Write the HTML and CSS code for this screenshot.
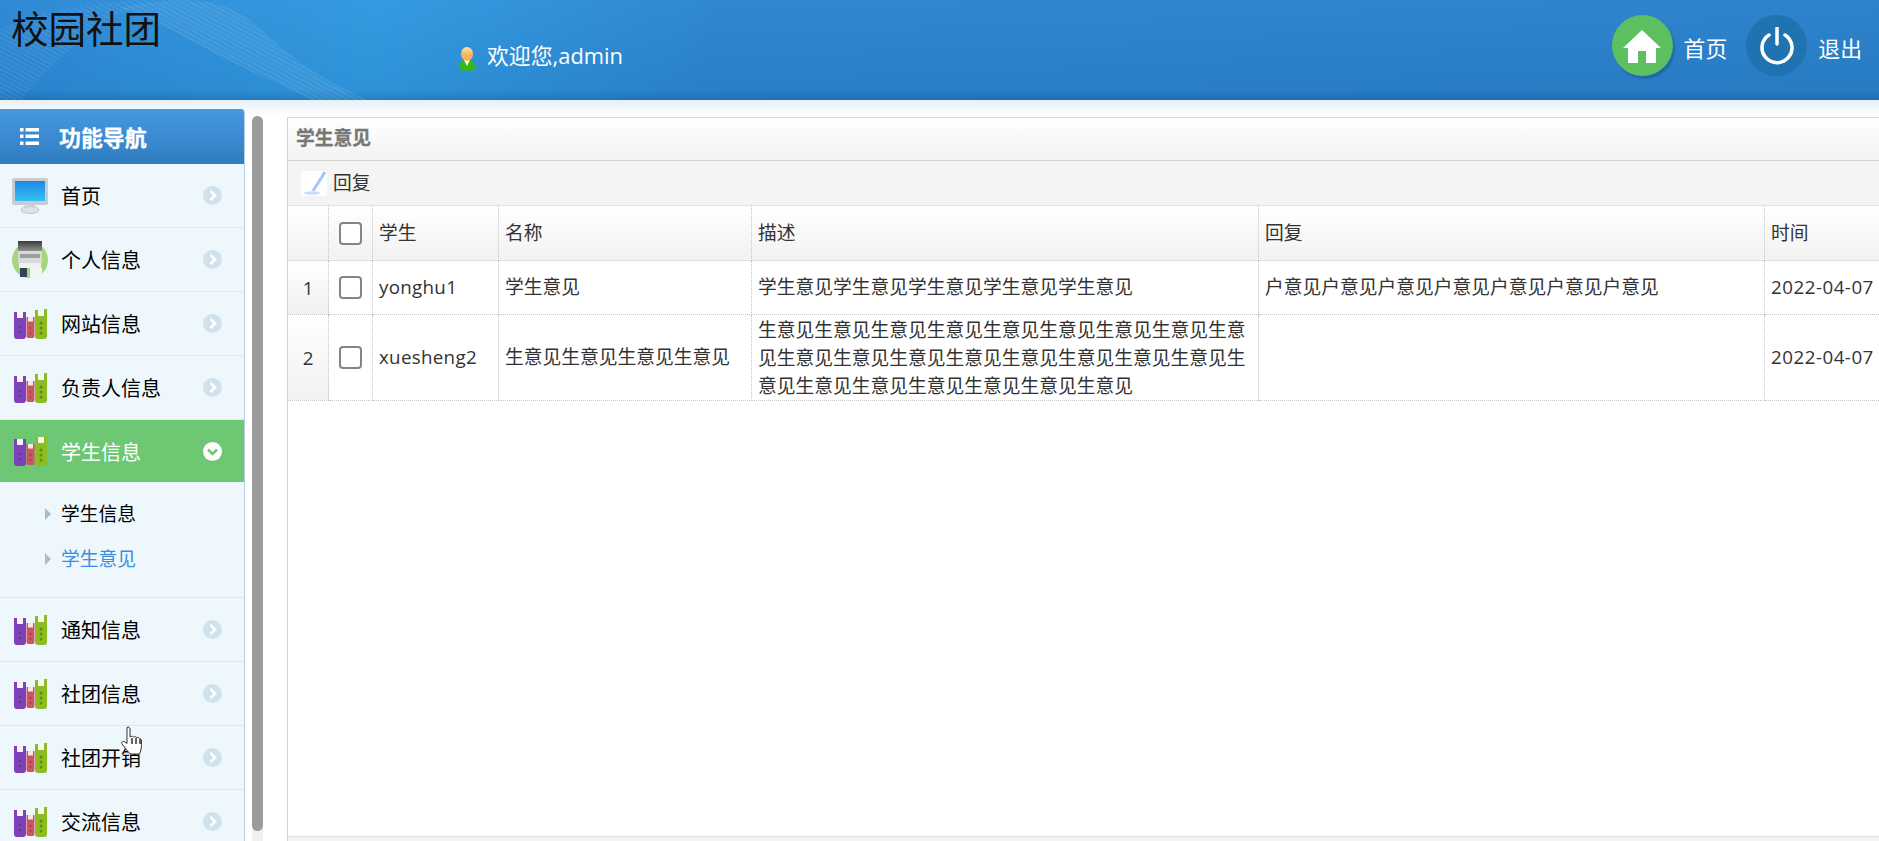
FILE: index.html
```html
<!DOCTYPE html>
<html lang="zh-CN">
<head>
<meta charset="utf-8">
<title>校园社团</title>
<link rel="stylesheet" href="styles.css">
</head>
<body>
<svg class="sprites" width="0" height="0" aria-hidden="true">
  <defs>
    <linearGradient id="screen" x1="0" y1="0" x2="0" y2="1"><stop offset="0" stop-color="#1f86e0"/><stop offset="1" stop-color="#35c3f5"/></linearGradient>
    <linearGradient id="body" x1="0" y1="0" x2="0" y2="1"><stop offset="0" stop-color="#ffe2b0"/><stop offset=".6" stop-color="#f6b45a"/></linearGradient>
    <linearGradient id="printer-top" x1="0" y1="0" x2="0" y2="1"><stop offset="0" stop-color="#3c3c3c"/><stop offset="1" stop-color="#8f8f8f"/></linearGradient>
    <symbol id="books" viewBox="0 0 33 30">
      <path d="M0 3h3v5q0 1 1 1h4q1 0 1-1V3h3v24q0 3-3 3H3q-3 0-3-3z" fill="#7d42ba"/>
      <path d="M3 3h6v5q0 1-1 1H4q-1 0-1-1z" fill="#f6f1fa"/>
      <circle cx="6" cy="18" r="1" fill="#5e3191"/><circle cx="6" cy="23" r="1" fill="#5e3191"/>
      <path d="M12.500 8h8v19q0 2-2 2h-4q-2 0-2-2z" fill="#cc5560"/>
      <rect x="14" y="8" width="5" height="4.500" fill="#f2e9ea"/>
      <circle cx="16.500" cy="19" r="1" fill="#a23a45"/><circle cx="16.500" cy="24" r="1" fill="#a23a45"/>
      <path d="M21 1h3v5q0 1 1 1h4q1 0 1-1V0h3v27q0 3-3 3h-6q-3 0-3-3z" fill="#8cbc20"/>
      <path d="M24 1h6v5q0 1-1 1h-4q-1 0-1-1z" fill="#f8f9f2"/>
      <circle cx="27" cy="14" r="1.500" fill="#618a10"/><circle cx="27" cy="19" r="1.500" fill="#618a10"/><circle cx="27" cy="24" r="1.500" fill="#618a10"/>
    </symbol>
    <symbol id="chev-right" viewBox="0 0 19 19">
      <circle cx="9.500" cy="9.500" r="9.500" fill="#d0e2ed"/>
      <path d="M7.500 5l4.500 4.500L7.500 14" fill="none" stroke="#fff" stroke-width="2.500"/>
    </symbol>
  </defs>
</svg>

<header class="topbar">
  <svg class="waves" width="420" height="100" viewBox="0 0 420 100" aria-hidden="true">
    <defs>
      <pattern id="lines" width="4" height="4" patternUnits="userSpaceOnUse" patternTransform="rotate(28)">
        <rect width="4" height="1.500" fill="#fff" fill-opacity=".09"/>
      </pattern>
    </defs>
    <path d="M120 8C190-8 230 0 262 30 295 62 330 84 368 100H312C270 80 220 58 172 30 150 18 134 12 120 8Z" fill="url(#lines)"/>
    <path d="M0 28C60 6 110 0 160 0L130 8C100 22 50 62 22 100H0Z" fill="url(#lines)"/>
    <path d="M120 8C190-8 230 0 262 30 295 62 330 84 368 100H312C270 80 220 58 172 30 150 18 134 12 120 8Z" fill="#fff" fill-opacity=".04"/>
  </svg>
  <h1 class="brand">校园社团</h1>
  <div class="welcome">
    <svg class="user-icon" width="18" height="24" viewBox="0 0 18 24" aria-hidden="true">
      <path d="M1 23c-1-6 2-9 5-10h6c3 1 6 4 5 10q-8 1.500-16 0z" fill="#35b81c"/>
      <path d="M6 13l3 6 3-6z" fill="#fff"/>
      <ellipse cx="9" cy="7" rx="6" ry="7" fill="url(#body)"/>
    </svg>
    <span class="welcome-text">欢迎您,admin</span>
  </div>
  <nav class="actions">
    <a class="action">
      <span class="disc disc-home">
        <svg width="40" height="36" viewBox="0 0 40 36" aria-hidden="true">
          <path d="M20 2L1 20h5v15h10V23h8v12h10V20h5z" fill="#fff"/>
        </svg>
      </span>
      <span class="action-label">首页</span>
    </a>
    <a class="action">
      <span class="disc disc-power">
        <svg width="36" height="38" viewBox="0 0 36 38" aria-hidden="true">
          <path d="M10 8a15 15 0 1 0 16 0" fill="none" stroke="#fff" stroke-width="3.500" stroke-linecap="round"/>
          <path d="M18 1v16" fill="none" stroke="#fff" stroke-width="3.500" stroke-linecap="round"/>
        </svg>
      </span>
      <span class="action-label">退出</span>
    </a>
  </nav>
</header>

<main class="content">
  <aside class="sidebar">
    <div class="nav-head">
      <svg class="nav-head-icon" width="19" height="17" viewBox="0 0 19 17" aria-hidden="true">
        <path d="M0 0h3.500v3.500H0zM0 6.500h3.500V10H0zM0 13.500h3.500V17H0zM5.500 0H19v3.500H5.500zM5.500 6.500H19V10H5.500zM5.500 13.500H19V17H5.500z" fill="#fff"/>
      </svg>
      <span>功能导航</span>
    </div>
    <ul class="menu">
      <li class="item">
        <svg class="item-icon" width="38" height="36" viewBox="0 0 38 36" aria-hidden="true">
          <rect x="1" y="0" width="36" height="27" rx="2" fill="#c9ccd0"/>
          <rect x="4" y="3" width="30" height="20" fill="url(#screen)"/>
          <path d="M14 27h10l1 3H13z" fill="#d4d6d8"/>
          <ellipse cx="19" cy="32" rx="9" ry="3.500" fill="#dfe1e3" stroke="#c4c6c8"/>
        </svg>
        <span class="item-label">首页</span>
        <svg class="chev" width="19" height="19"><use href="#chev-right"/></svg>
      </li>
      <li class="item">
        <svg class="item-icon" width="38" height="38" viewBox="0 0 38 38" aria-hidden="true">
          <circle cx="19" cy="19" r="18" fill="#a5d57c"/>
          <rect x="7" y="0" width="24" height="10" fill="url(#printer-top)"/>
          <rect x="7" y="10" width="24" height="12" fill="#d6dada"/>
          <rect x="9" y="13" width="20" height="4" fill="#9aa0a0"/>
          <rect x="8" y="22" width="22" height="5" fill="#f0f2ee"/>
          <rect x="9" y="27" width="7" height="9" fill="#34425f"/>
          <rect x="19" y="27" width="12" height="10" fill="#f3f5f0"/>
        </svg>
        <span class="item-label">个人信息</span>
        <svg class="chev" width="19" height="19"><use href="#chev-right"/></svg>
      </li>
      <li class="item">
        <svg class="item-icon" width="33" height="30"><use href="#books"/></svg>
        <span class="item-label">网站信息</span>
        <svg class="chev" width="19" height="19"><use href="#chev-right"/></svg>
      </li>
      <li class="item">
        <svg class="item-icon" width="33" height="30"><use href="#books"/></svg>
        <span class="item-label">负责人信息</span>
        <svg class="chev" width="19" height="19"><use href="#chev-right"/></svg>
      </li>
      <li class="item item-active">
        <svg class="item-icon" width="33" height="30"><use href="#books"/></svg>
        <span class="item-label">学生信息</span>
        <svg class="chev" width="19" height="19" viewBox="0 0 19 19" aria-hidden="true">
          <circle cx="9.500" cy="9.500" r="9.500" fill="#fff"/>
          <path d="M5 7.500l4.500 4.500L14 7.500" fill="none" stroke="#6ec873" stroke-width="2.500"/>
        </svg>
      </li>
      <li class="submenu">
        <a class="sub-link">学生信息</a>
        <a class="sub-link sub-link-current">学生意见</a>
      </li>
      <li class="item">
        <svg class="item-icon" width="33" height="30"><use href="#books"/></svg>
        <span class="item-label">通知信息</span>
        <svg class="chev" width="19" height="19"><use href="#chev-right"/></svg>
      </li>
      <li class="item">
        <svg class="item-icon" width="33" height="30"><use href="#books"/></svg>
        <span class="item-label">社团信息</span>
        <svg class="chev" width="19" height="19"><use href="#chev-right"/></svg>
      </li>
      <li class="item">
        <svg class="item-icon" width="33" height="30"><use href="#books"/></svg>
        <span class="item-label">社团开销</span>
        <svg class="chev" width="19" height="19"><use href="#chev-right"/></svg>
      </li>
      <li class="item">
        <svg class="item-icon" width="33" height="30"><use href="#books"/></svg>
        <span class="item-label">交流信息</span>
        <svg class="chev" width="19" height="19"><use href="#chev-right"/></svg>
      </li>
    </ul>
  </aside>

  <div class="rail"><div class="rail-thumb"></div></div>

  <section class="panel">
    <div class="panel-title">学生意见</div>
    <div class="toolbar">
      <svg class="reply-icon" width="26" height="25" viewBox="0 0 26 25" aria-hidden="true">
        <rect width="26" height="25" fill="#fff"/>
        <path d="M24 1L12 20" stroke="#a4c6f8" stroke-width="3" fill="none"/>
        <ellipse cx="11" cy="22" rx="8" ry="1.800" fill="#c9ddfa"/>
      </svg>
      <span class="toolbar-label">回复</span>
    </div>
    <div class="grid-wrap">
      <table class="grid">
        <colgroup>
          <col class="c-num"><col class="c-check"><col class="c-user"><col class="c-name"><col class="c-desc"><col class="c-reply"><col class="c-time">
        </colgroup>
        <thead>
          <tr>
            <th class="rownum"></th>
            <th class="check"><span class="box"></span></th>
            <th>学生</th><th>名称</th><th>描述</th><th>回复</th><th>时间</th>
          </tr>
        </thead>
        <tbody>
          <tr class="row-one">
            <td class="rownum">1</td>
            <td class="check"><span class="box"></span></td>
            <td class="latin">yonghu1</td>
            <td>学生意见</td>
            <td>学生意见学生意见学生意见学生意见学生意见</td>
            <td>户意见户意见户意见户意见户意见户意见户意见</td>
            <td class="date">2022-04-07</td>
          </tr>
          <tr class="row-two">
            <td class="rownum">2</td>
            <td class="check"><span class="box"></span></td>
            <td class="latin">xuesheng2</td>
            <td>生意见生意见生意见生意见</td>
            <td class="long-text">生意见生意见生意见生意见生意见生意见生意见生意见生意见生意见生意见生意见生意见生意见生意见生意见生意见生意见生意见生意见生意见生意见生意见生意见</td>
            <td></td>
            <td class="date">2022-04-07</td>
          </tr>
        </tbody>
      </table>
    </div>
    <div class="panel-foot"></div>
  </section>

  <svg class="cursor" width="23" height="30" viewBox="0 0 23 30" aria-hidden="true">
    <path d="M6 1.500c1.500-1 3 0 3 1.500v8l1-.5c1-.5 2 0 2.500.5 1-.5 2-.5 3 .5 1-.5 2.500 0 3 1 1 0 2 1 2 2.500 0 5 0 9-2 13H9L1 18c-1-2 1-3.500 3-2l2 1.500z" fill="#fff" stroke="#333" stroke-width="1"/>
    <path d="M11 12v6M15 12v6M19 13v5" stroke="#333" stroke-width="1.500" fill="none"/>
  </svg>
</main>
</body>
</html>
```
FILE: styles.css
```css
* { box-sizing: border-box; }

html, body {
  margin: 0;
  height: 100%;
  overflow: hidden;
  background: #fff;
}

body {
  position: relative;
  width: 1879px;
  height: 841px;
  font-family: "Open Sans", "Noto Sans CJK SC", sans-serif;
  color: #333;
}

.sprites { position: absolute; }

/* Header */
.topbar {
  position: relative;
  display: flex;
  height: 100px;
  color: #fff;
  overflow: hidden;
  background:
    linear-gradient(180deg, rgba(0,0,0,0) 90%, rgba(10,50,100,.2) 100%),
    linear-gradient(180deg, rgba(255,255,255,.03) 0, rgba(0,0,0,.04) 100%),
    linear-gradient(100deg, #2a86d4 0, #2e98e0 20%, #2a84d0 38%, #287fca 100%);
}

.waves {
  position: absolute;
  left: 0;
  top: 0;
}

.brand {
  position: relative;
  margin: 0;
  width: 458px;
  padding: 2px 0 0 11px;
  font-family: "Noto Sans CJK SC", sans-serif;
  font-size: 37.5px;
  line-height: 50px;
  font-weight: 400;
  color: #111;
}

.welcome {
  display: flex;
  align-items: flex-start;
  gap: 11px;
  padding-top: 47px;
  font-size: 21.875px;
  line-height: 24px;
}

.welcome-text { margin-top: -3px; }

.user-icon { flex: none; }

.actions {
  display: flex;
  gap: 19px;
  margin-left: auto;
  padding: 15px 17px 0 0;
  font-size: 21.875px;
}

.action {
  display: flex;
  align-items: center;
  gap: 11px;
  height: 61px;
}

.action-label { padding-top: 3px; }

.disc {
  display: flex;
  align-items: center;
  justify-content: center;
  width: 61px;
  height: 61px;
  border-radius: 50%;
}

.disc-home {
  background: #5cbf60;
  box-shadow: 2px 3px 2px rgba(20,80,140,.45);
}

.disc-power { background: #1f73b0; }

/* Main */
.content {
  position: relative;
  display: flex;
  align-items: flex-start;
  height: 741px;
  background: linear-gradient(180deg, #e6f0f6 0, #fff 17px);
}

/* Sidebar */
.sidebar {
  flex: none;
  width: 245px;
  height: 732px;
  margin-top: 9px;
  overflow: hidden;
  background: #eef7fc;
  border-right: 1px solid #b9d1e5;
  border-top-right-radius: 4px;
}

.nav-head {
  display: flex;
  align-items: center;
  gap: 20px;
  height: 55px;
  padding-left: 20px;
  color: #fff;
  font-size: 21.9px;
  font-weight: 700;
  -webkit-text-stroke: .3px #fff;
  background: linear-gradient(180deg, #4698df 0, #3c8bd2 50%, #2f7cbe 100%);
}

.nav-head-icon { flex: none; }

.menu {
  list-style: none;
  margin: 0;
  padding: 0;
}

.item {
  display: grid;
  grid-template-columns: 61px 1fr 19px;
  align-items: center;
  height: 64px;
  padding-right: 22px;
  font-size: 20px;
  color: #000;
  border-bottom: 1px solid #dce8ef;
}

.item-icon {
  justify-self: center;
  margin-left: -1px;
}

.chev { display: block; }

.item-active {
  height: 62px;
  color: #fff;
  background: #6ec873;
  border-bottom: 0;
}

.submenu {
  display: flex;
  flex-direction: column;
  height: 116px;
  padding: 10px 0 0;
  border-bottom: 1px solid #dce8ef;
}

.sub-link {
  position: relative;
  height: 44.5px;
  padding-left: 61px;
  font-size: 18.75px;
  line-height: 44.5px;
  color: #000;
}

.sub-link::before {
  content: "";
  position: absolute;
  left: 45px;
  top: 16px;
  border-left: 6px solid #a9bccb;
  border-top: 6px solid transparent;
  border-bottom: 6px solid transparent;
}

.sub-link-current { color: #3a8ee0; }

/* Fake scrollbar */
.rail {
  flex: none;
  width: 11px;
  height: 725px;
  margin: 16px 0 0 7px;
  background: #f1f1f1;
  border-radius: 5px 5px 0 0;
}

.rail-thumb {
  height: 715px;
  background: #9b9b9b;
  border-radius: 6px;
}

/* Panel */
.panel {
  flex: none;
  display: flex;
  flex-direction: column;
  width: 1592px;
  height: 724px;
  margin: 17px 0 0 24px;
  border-top: 1px solid #d2d2d2;
  border-left: 1px solid #d2d2d2;
}

.panel-title {
  height: 43px;
  padding-left: 8px;
  font-size: 18.75px;
  font-weight: 700;
  line-height: 40px;
  color: #777;
  -webkit-text-stroke: .3px #777;
  background: linear-gradient(180deg, #fff 0, #f2f2f2 100%);
  border-bottom: 1px solid #d4d4d4;
}

.toolbar {
  display: flex;
  align-items: center;
  gap: 6px;
  height: 45px;
  padding-left: 13px;
  font-size: 18.75px;
  background: #f4f4f4;
  border-bottom: 1px solid #e2e2e2;
}

.toolbar-label { padding-bottom: 3px; }

.reply-icon { flex: none; }

.grid-wrap {
  flex: 1;
  overflow: hidden;
}

.grid {
  width: 1637px;
  table-layout: fixed;
  border-collapse: separate;
  border-spacing: 0;
  font-size: 18.75px;
  line-height: 28px;
  color: #333;
}

.c-num { width: 41px; }
.c-check { width: 44px; }
.c-user { width: 126px; }
.c-name { width: 253px; }
.c-desc { width: 507px; }
.c-reply { width: 506px; }
.c-time { width: 160px; }

.grid th,
.grid td {
  padding: 0 6px 2px;
  text-align: left;
  vertical-align: middle;
  font-weight: 400;
  border-right: 1px dotted #c4c4c4;
  border-bottom: 1px dotted #c4c4c4;
}

.grid th {
  height: 55px;
  padding-bottom: 0;
  background: linear-gradient(180deg, #fff 0, #f2f2f2 100%);
  border-bottom: 1px solid #dedede;
}

.row-one td { height: 54px; }
.row-two td { height: 86px; }

.grid .long-text { padding-bottom: 0; }

.latin { letter-spacing: .3px; }
.date { letter-spacing: .5px; }

.grid .rownum {
  padding: 0;
  text-align: center;
  background: linear-gradient(180deg, #fff 0, #f1f1f1 100%);
}

.grid .check {
  padding: 0 0 3px;
  text-align: center;
}

.box {
  display: inline-block;
  vertical-align: middle;
  width: 23px;
  height: 23px;
  background: #fff;
  border: 2px solid #858585;
  border-radius: 4px;
}

.panel-foot {
  flex: none;
  height: 5px;
  background: #f3f3f3;
  border-top: 1px solid #e0e0e0;
}

/* Mouse pointer captured in the screenshot */
.cursor {
  position: absolute;
  left: 121px;
  top: 626px;
}
```
